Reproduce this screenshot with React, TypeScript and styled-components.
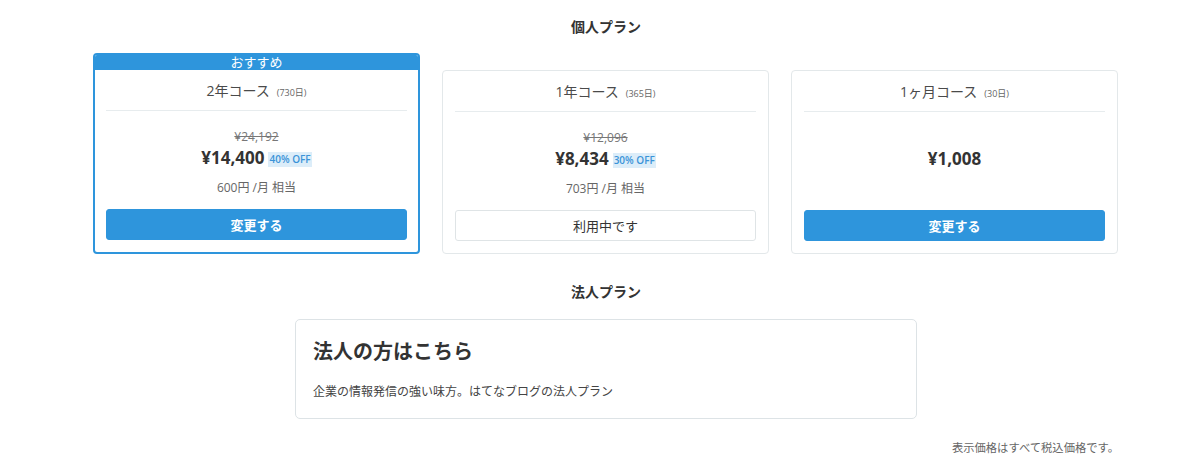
import React from 'react';
import styled, { createGlobalStyle } from 'styled-components';

const GlobalStyle = createGlobalStyle`
  body {
    margin: 0;
    background: #ffffff;
    font-family: 'Open Sans', 'Noto Sans CJK JP', sans-serif;
    color: #3d3d3d;
  }
`;

const Page = styled.div`
  width: 1026px;
  margin-left: 93px;
  padding-top: 17px;
`;

const SectionTitle = styled.h2`
  margin: 0;
  font-size: 14px;
  line-height: 20px;
  font-weight: 700;
  text-align: center;
  color: #333333;
`;

const PlanRow = styled.div`
  display: grid;
  grid-template-columns: repeat(3, 327px);
  column-gap: 22px;
  align-items: end;
  margin-top: 16px;
`;

const Card = styled.div<{ $featured?: boolean }>`
  border: ${(p) => (p.$featured ? '2px solid #2e95dc' : '1px solid #e3e8ea')};
  border-radius: 4px;
  background: #fff;
  overflow: hidden;
`;

const Badge = styled.div`
  background: #2e95dc;
  color: #ffffff;
  font-size: 13px;
  line-height: 14px;
  padding-bottom: 1px;
  text-align: center;
`;

const CardBody = styled.div<{ $featured?: boolean }>`
  padding: 0 ${(p) => (p.$featured ? 11 : 12)}px 12px;
`;

const CourseHead = styled.div`
  padding: 11px 0 7px;
  border-bottom: 1px solid #e7ecee;
  text-align: center;
  font-size: 14px;
  line-height: 20px;
  color: #4a4a4a;
`;

const Days = styled.span`
  font-size: 9px;
  color: #666;
  margin-left: 7px;
`;

const PriceArea = styled.div`
  height: 98px;
  padding-top: 17px;
  box-sizing: border-box;
  text-align: center;
  display: flex;
  flex-direction: column;
  align-items: center;
`;

const Strike = styled.div<{ $hidden?: boolean }>`
  font-size: 12px;
  line-height: 18px;
  color: #777;
  text-decoration: line-through;
  visibility: ${(p) => (p.$hidden ? 'hidden' : 'visible')};
`;

const Price = styled.div`
  font-size: 17px;
  line-height: 24px;
  font-weight: 700;
  color: #333;
  display: flex;
  align-items: center;
  gap: 4px;
`;

const Off = styled.span`
  font-size: 10px;
  line-height: 15px;
  font-weight: 600;
  color: #3a93d8;
  background: #dcedf9;
  padding: 0 1px;
  margin-top: 2px;
`;

const PerMonth = styled.div`
  margin-top: 9px;
  font-size: 12px;
  line-height: 18px;
  color: #666;
`;

const ActionButton = styled.button<{ $current?: boolean }>`
  display: block;
  width: 100%;
  height: 31px;
  border-radius: 3px;
  font-family: inherit;
  font-size: 13px;
  font-weight: ${(p) => (p.$current ? 400 : 700)};
  cursor: pointer;
  border: ${(p) => (p.$current ? '1px solid #dfe4e6' : '1px solid #2e95dc')};
  background: ${(p) => (p.$current ? '#ffffff' : '#2e95dc')};
  color: ${(p) => (p.$current ? '#333' : '#ffffff')};
`;

const CorpTitle = styled(SectionTitle)`
  margin-top: 28px;
`;

const CorpCard = styled.div`
  width: 622px;
  box-sizing: border-box;
  margin: 17px 0 0 202px;
  border: 1px solid #dde3e6;
  border-radius: 5px;
  padding: 18px 17px 16px;
`;

const CorpHeading = styled.div`
  font-size: 20px;
  line-height: 28px;
  font-weight: 700;
  color: #333;
`;

const CorpText = styled.div`
  margin-top: 16px;
  font-size: 12px;
  line-height: 20px;
  color: #444;
`;

const Note = styled.div`
  margin-top: 20px;
  text-align: right;
  font-size: 11.3px;
  line-height: 18px;
  color: #666;
`;

type Plan = {
  name: string;
  days: string;
  list?: string;
  price: string;
  off?: string;
  perMonth?: string;
  current?: boolean;
  featured?: boolean;
};

const plans: Plan[] = [
  { name: '2年コース', days: '(730日)', list: '¥24,192', price: '¥14,400', off: '40% OFF', perMonth: '600円 /月 相当', featured: true },
  { name: '1年コース', days: '(365日)', list: '¥12,096', price: '¥8,434', off: '30% OFF', perMonth: '703円 /月 相当', current: true },
  { name: '1ヶ月コース', days: '(30日)', price: '¥1,008' },
];

export default function App() {
  return (
    <>
      <GlobalStyle />
      <Page>
        <SectionTitle>個人プラン</SectionTitle>
        <PlanRow>
          {plans.map((plan) => (
            <Card key={plan.name} $featured={plan.featured}>
              {plan.featured && <Badge>おすすめ</Badge>}
              <CardBody $featured={plan.featured}>
                <CourseHead>
                  {plan.name}
                  <Days>{plan.days}</Days>
                </CourseHead>
                <PriceArea>
                  <Strike $hidden={!plan.list}>{plan.list || '-'}</Strike>
                  <Price>
                    {plan.price}
                    {plan.off && <Off>{plan.off}</Off>}
                  </Price>
                  {plan.perMonth && <PerMonth>{plan.perMonth}</PerMonth>}
                </PriceArea>
                <ActionButton $current={plan.current}>
                  {plan.current ? '利用中です' : '変更する'}
                </ActionButton>
              </CardBody>
            </Card>
          ))}
        </PlanRow>
        <CorpTitle>法人プラン</CorpTitle>
        <CorpCard>
          <CorpHeading>法人の方はこちら</CorpHeading>
          <CorpText>企業の情報発信の強い味方。はてなブログの法人プラン</CorpText>
        </CorpCard>
        <Note>表示価格はすべて税込価格です。</Note>
      </Page>
    </>
  );
}
